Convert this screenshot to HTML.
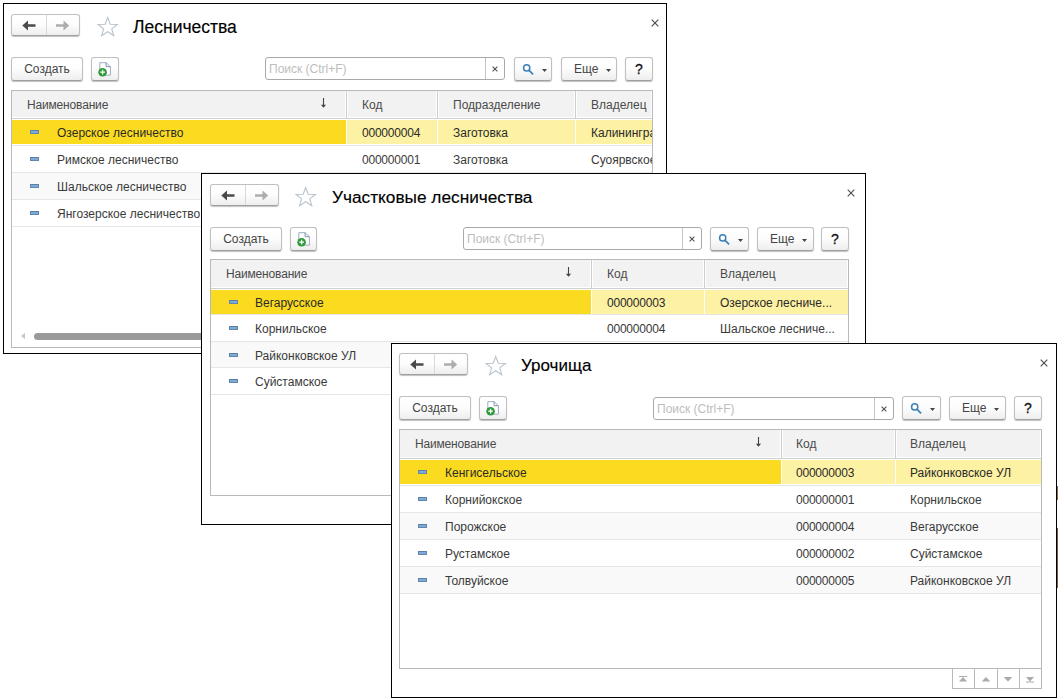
<!DOCTYPE html>
<html lang="ru"><head><meta charset="utf-8"><title>Лесничества</title><style>
html,body{margin:0;padding:0;}
body{width:1058px;height:699px;overflow:hidden;background:#fff;position:relative;font-family:"Liberation Sans",sans-serif;font-size:12px;color:#333;}
.win{position:absolute;box-sizing:border-box;border:1px solid #000;background:#fff;overflow:hidden;}
.win *{box-sizing:border-box;}
.abs{position:absolute;}
.btn{position:absolute;border:1px solid #c0c0c0;border-bottom-color:#a0a0a0;border-radius:3px;background:linear-gradient(#ffffff 0%,#fdfdfd 45%,#eeeeee 100%);box-shadow:0 1px 1px rgba(0,0,0,.25);color:#444;text-align:center;white-space:nowrap;}
.nav .div{position:absolute;left:34px;top:0;width:1px;height:20px;background:#d9d9d9;}
.title{position:absolute;line-height:22px;color:#000;white-space:nowrap;-webkit-text-stroke:0.15px #000;}
.search{position:absolute;border:1px solid #a9a9a9;border-radius:3px;background:#fff;}
.search .ph{position:absolute;left:3px;top:0;line-height:22px;color:#bdbdbd;white-space:nowrap;}
.search .clr{position:absolute;right:0;top:0;height:21px;border-left:1px solid #c4c4c4;}
.tbl{position:absolute;border:1px solid #b9b9b9;background:#fff;overflow:hidden;}
.hdr{position:absolute;left:0;top:0;width:100%;background:#f2f2f2;border-bottom:1px solid #d0d0d0;box-shadow:inset 0 -1px 0 #fff,inset -1px 0 0 #fff;}
.hc{position:absolute;top:0;line-height:28px;color:#4a4a4a;white-space:nowrap;}
.hsep{position:absolute;top:0;width:1px;height:100%;background:#cecece;box-shadow:-1px 0 0 #fff,1px 0 0 #fff;}
.row{position:absolute;left:0;width:100%;height:27px;border-bottom:1px solid #e6e6e6;}
.row.alt{background:#f9f9f9;}
.cell{position:absolute;top:1px;height:25px;line-height:27px;white-space:nowrap;color:#3a3a3a;overflow:hidden;}
.sel .cell{color:#2a2a2a;}
.selbg{position:absolute;top:1px;height:24px;}
.ico{position:absolute;top:11px;width:9px;height:4px;background:#7faad6;border:1px solid #5f87b0;border-top-color:#5a7fa6;}
.navb{position:absolute;border:1px solid #b9b9b9;border-top:none;}
</style></head><body>
<div class="win" style="left:3px;top:3px;width:664px;height:351px;"><div class="btn nav" style="left:7px;top:10px;width:69px;height:22px;"><div class="div"></div><svg class="abs" style="left:10px;top:5px" width="15" height="11" viewBox="0 0 15 11"><path d="M0.3 5.5 L6 0.5 L6 4.3 L13.5 4.3 L13.5 6.7 L6 6.7 L6 10.5 Z" fill="#4a4a4a"/></svg><svg class="abs" style="left:43px;top:5px" width="15" height="11" viewBox="0 0 15 11"><path d="M14.2 5.5 L8.5 0.5 L8.5 4.3 L1 4.3 L1 6.7 L8.5 6.7 L8.5 10.5 Z" fill="#adadad"/></svg></div><svg class="abs" style="left:92px;top:12px" width="23.4" height="21.45" viewBox="0 0 24 22"><path d="M12 1.6 L14.6 8.4 L21.9 8.7 L16.2 13.2 L18.2 20.2 L12 16.2 L5.8 20.2 L7.8 13.2 L2.1 8.7 L9.4 8.4 Z" fill="#fff" stroke="#b9c3cb" stroke-width="1.15" stroke-linejoin="miter"/></svg><div class="title" style="left:129px;top:12px;font-size:17.5px">Лесничества</div><div class="btn" style="left:7px;top:53px;width:72px;height:24px;line-height:22px;">Создать</div><div class="btn" style="left:87px;top:53px;width:28px;height:24px;line-height:22px;"><svg class="abs" style="left:6px;top:3px" width="14" height="16" viewBox="0 0 14 16"><path d="M1.8 1.7 H8.1 L12.4 5.7 V14.2 H1.8 Z" fill="#fff" stroke="#9dabbf" stroke-width="1"/><path d="M8.1 1.7 V5.7 H12.4" fill="none" stroke="#7f93ae" stroke-width="1"/><circle cx="4.6" cy="11.2" r="4.3" fill="#2d9a38"/><path d="M4.6 8.8 V13.6 M2.2 11.2 H7" stroke="#fff" stroke-width="1.3"/></svg></div><div class="search" style="left:261px;top:53px;width:240px;height:23px;"><span class="ph">Поиск (Ctrl+F)</span><div class="clr" style="width:19px"><svg class="abs" style="left:6px;top:8px" width="6" height="6" viewBox="0 0 6 6"><path d="M0.6 0.6 L5.4 5.4 M5.4 0.6 L0.6 5.4" stroke="#555" stroke-width="1.15"/></svg></div></div><div class="btn" style="left:510px;top:53px;width:38px;height:24px;line-height:22px;"><svg class="abs" style="left:7px;top:5px" width="13" height="13" viewBox="0 0 13 13"><circle cx="4.7" cy="4.9" r="3.1" fill="#fff" stroke="#3a80b8" stroke-width="1.5"/><path d="M7.1 7.3 L10.6 10.9" stroke="#3a80b8" stroke-width="1.7" stroke-linecap="round"/></svg><svg class="abs" style="left:27px;top:11px" width="5" height="3" viewBox="0 0 5 3"><path d="M0 0 H5 L2.5 3 Z" fill="#444"/></svg></div><div class="btn" style="left:557px;top:53px;width:56px;height:24px;line-height:22px;text-align:left;padding-left:12px;">Еще<svg class="abs" style="left:44px;top:11px" width="5" height="3" viewBox="0 0 5 3"><path d="M0 0 H5 L2.5 3 Z" fill="#444"/></svg></div><div class="btn" style="left:621px;top:53px;width:28px;height:24px;line-height:22px;font-size:14px;color:#111;-webkit-text-stroke:0.3px #111;">?</div><svg class="abs" style="left:647px;top:15px" width="8" height="8" viewBox="0 0 8 8"><path d="M0.7 0.7 L7.3 7.3 M7.3 0.7 L0.7 7.3" stroke="#505050" stroke-width="1.15"/></svg><div class="tbl" style="left:7px;top:86px;width:642px;height:258px;"><div class="hdr" style="height:28px"><div class="hc" style="left:15px;letter-spacing:-0.17px;">Наименование</div><div class="hc" style="left:350px;">Код</div><div class="hc" style="left:441px;">Подразделение</div><div class="hc" style="left:579px;">Владелец</div><div class="hsep" style="left:334px"></div><div class="hsep" style="left:425px"></div><div class="hsep" style="left:563px"></div><svg class="abs" style="left:308px;top:7px" width="7" height="11" viewBox="0 0 7 11"><path d="M3.5 0 V8" stroke="#444" stroke-width="1.1"/><path d="M0.9 6.7 H6.1 L3.5 9.8 Z" fill="#444"/></svg></div><div class="row sel" style="top:28px;height:27px"><div class="selbg" style="left:0px;width:334px;background:#fbdb1f"></div><div class="selbg" style="left:335px;width:90px;background:#fdf1a3"></div><div class="selbg" style="left:426px;width:137px;background:#fdf1a3"></div><div class="selbg" style="left:564px;width:76px;background:#fdf1a3"></div><div class="ico" style="left:18px"></div><div class="cell" style="left:45px;width:289px;">Озерское лесничество</div><div class="cell" style="left:350px;width:75px;letter-spacing:-0.22px;">000000004</div><div class="cell" style="left:441px;width:122px;">Заготовка</div><div class="cell" style="left:579px;width:61px;">Калининградское</div></div><div class="row" style="top:55px;height:27px"><div class="ico" style="left:18px"></div><div class="cell" style="left:45px;width:289px;">Римское лесничество</div><div class="cell" style="left:350px;width:75px;letter-spacing:-0.22px;">000000001</div><div class="cell" style="left:441px;width:122px;">Заготовка</div><div class="cell" style="left:579px;width:61px;">Суоярвское</div></div><div class="row alt" style="top:82px;height:27px"><div class="ico" style="left:18px"></div><div class="cell" style="left:45px;width:289px;">Шальское лесничество</div><div class="cell" style="left:350px;width:75px;letter-spacing:-0.22px;">000000002</div><div class="cell" style="left:441px;width:122px;">Заготовка</div><div class="cell" style="left:579px;width:61px;">Суоярвское</div></div><div class="row" style="top:109px;height:27px"><div class="ico" style="left:18px"></div><div class="cell" style="left:45px;width:289px;">Янгозерское лесничество</div><div class="cell" style="left:350px;width:75px;letter-spacing:-0.22px;">000000003</div><div class="cell" style="left:441px;width:122px;">Заготовка</div><div class="cell" style="left:579px;width:61px;">Суоярвское</div></div><svg class="abs" style="left:8px;top:241px" width="8" height="8" viewBox="0 0 8 8"><path d="M1 4 L5 0.8 V7.2 Z" fill="#c8c8c8"/></svg><div class="abs" style="left:22px;top:242px;width:700px;height:7px;border-radius:4px;background:#9a9a9a"></div></div></div>
<div class="win" style="left:201px;top:173px;width:665px;height:352px;"><div class="btn nav" style="left:8px;top:10px;width:69px;height:22px;"><div class="div"></div><svg class="abs" style="left:10px;top:5px" width="15" height="11" viewBox="0 0 15 11"><path d="M0.3 5.5 L6 0.5 L6 4.3 L13.5 4.3 L13.5 6.7 L6 6.7 L6 10.5 Z" fill="#4a4a4a"/></svg><svg class="abs" style="left:43px;top:5px" width="15" height="11" viewBox="0 0 15 11"><path d="M14.2 5.5 L8.5 0.5 L8.5 4.3 L1 4.3 L1 6.7 L8.5 6.7 L8.5 10.5 Z" fill="#adadad"/></svg></div><svg class="abs" style="left:92px;top:12px" width="23.4" height="21.45" viewBox="0 0 24 22"><path d="M12 1.6 L14.6 8.4 L21.9 8.7 L16.2 13.2 L18.2 20.2 L12 16.2 L5.8 20.2 L7.8 13.2 L2.1 8.7 L9.4 8.4 Z" fill="#fff" stroke="#b9c3cb" stroke-width="1.15" stroke-linejoin="miter"/></svg><div class="title" style="left:130px;top:12px;font-size:17.25px">Участковые лесничества</div><div class="btn" style="left:8px;top:53px;width:72px;height:24px;line-height:22px;">Создать</div><div class="btn" style="left:88px;top:53px;width:27px;height:24px;line-height:22px;"><svg class="abs" style="left:6px;top:3px" width="14" height="16" viewBox="0 0 14 16"><path d="M1.8 1.7 H8.1 L12.4 5.7 V14.2 H1.8 Z" fill="#fff" stroke="#9dabbf" stroke-width="1"/><path d="M8.1 1.7 V5.7 H12.4" fill="none" stroke="#7f93ae" stroke-width="1"/><circle cx="4.6" cy="11.2" r="4.3" fill="#2d9a38"/><path d="M4.6 8.8 V13.6 M2.2 11.2 H7" stroke="#fff" stroke-width="1.3"/></svg></div><div class="search" style="left:261px;top:53px;width:239px;height:23px;"><span class="ph">Поиск (Ctrl+F)</span><div class="clr" style="width:19px"><svg class="abs" style="left:6px;top:8px" width="6" height="6" viewBox="0 0 6 6"><path d="M0.6 0.6 L5.4 5.4 M5.4 0.6 L0.6 5.4" stroke="#555" stroke-width="1.15"/></svg></div></div><div class="btn" style="left:508px;top:53px;width:39px;height:24px;line-height:22px;"><svg class="abs" style="left:7px;top:5px" width="13" height="13" viewBox="0 0 13 13"><circle cx="4.7" cy="4.9" r="3.1" fill="#fff" stroke="#3a80b8" stroke-width="1.5"/><path d="M7.1 7.3 L10.6 10.9" stroke="#3a80b8" stroke-width="1.7" stroke-linecap="round"/></svg><svg class="abs" style="left:27px;top:11px" width="5" height="3" viewBox="0 0 5 3"><path d="M0 0 H5 L2.5 3 Z" fill="#444"/></svg></div><div class="btn" style="left:555px;top:53px;width:57px;height:24px;line-height:22px;text-align:left;padding-left:12px;">Еще<svg class="abs" style="left:44px;top:11px" width="5" height="3" viewBox="0 0 5 3"><path d="M0 0 H5 L2.5 3 Z" fill="#444"/></svg></div><div class="btn" style="left:619px;top:53px;width:28px;height:24px;line-height:22px;font-size:14px;color:#111;-webkit-text-stroke:0.3px #111;">?</div><svg class="abs" style="left:645px;top:15px" width="8" height="8" viewBox="0 0 8 8"><path d="M0.7 0.7 L7.3 7.3 M7.3 0.7 L0.7 7.3" stroke="#505050" stroke-width="1.15"/></svg><div class="tbl" style="left:8px;top:85px;width:639px;height:237px;"><div class="hdr" style="height:29px"><div class="hc" style="left:15px;letter-spacing:-0.17px;">Наименование</div><div class="hc" style="left:396px;">Код</div><div class="hc" style="left:509px;">Владелец</div><div class="hsep" style="left:380px"></div><div class="hsep" style="left:493px"></div><svg class="abs" style="left:354px;top:7px" width="7" height="11" viewBox="0 0 7 11"><path d="M3.5 0 V8" stroke="#444" stroke-width="1.1"/><path d="M0.9 6.7 H6.1 L3.5 9.8 Z" fill="#444"/></svg></div><div class="row sel" style="top:29px;height:26px"><div class="selbg" style="left:0px;width:380px;background:#fbdb1f"></div><div class="selbg" style="left:381px;width:112px;background:#fdf1a3"></div><div class="selbg" style="left:494px;width:143px;background:#fdf1a3"></div><div class="ico" style="left:18px"></div><div class="cell" style="left:44px;width:336px;">Вегарусское</div><div class="cell" style="left:396px;width:97px;letter-spacing:-0.22px;">000000003</div><div class="cell" style="left:509px;width:128px;">Озерское лесниче...</div></div><div class="row" style="top:55px;height:27px"><div class="ico" style="left:18px"></div><div class="cell" style="left:44px;width:336px;">Корнильское</div><div class="cell" style="left:396px;width:97px;letter-spacing:-0.22px;">000000004</div><div class="cell" style="left:509px;width:128px;">Шальское лесниче...</div></div><div class="row alt" style="top:82px;height:26px"><div class="ico" style="left:18px"></div><div class="cell" style="left:44px;width:336px;">Райконковское УЛ</div><div class="cell" style="left:396px;width:97px;letter-spacing:-0.22px;">000000001</div><div class="cell" style="left:509px;width:128px;">Римское лесничес...</div></div><div class="row" style="top:108px;height:27px"><div class="ico" style="left:18px"></div><div class="cell" style="left:44px;width:336px;">Суйстамское</div><div class="cell" style="left:396px;width:97px;letter-spacing:-0.22px;">000000002</div><div class="cell" style="left:509px;width:128px;">Янгозерское лесн...</div></div></div><div class="navb" style="left:557px;top:322px;width:23px;height:21px;"><svg class="abs" style="left:5px;top:7px" width="10" height="7" viewBox="0 0 10 7"><path d="M1 0.5 H9" stroke="#aaa" stroke-width="1"/><path d="M5 1 L9 5.5 H1 Z" fill="#aaa"/></svg></div><div class="navb" style="left:579px;top:322px;width:23px;height:21px;"><svg class="abs" style="left:5px;top:7px" width="10" height="7" viewBox="0 0 10 7"><path d="M5 1 L9.3 5.5 H0.7 Z" fill="#aaa"/></svg></div><div class="navb" style="left:601px;top:322px;width:24px;height:21px;"><svg class="abs" style="left:6px;top:7px" width="10" height="7" viewBox="0 0 10 7"><path d="M5 5.5 L9.3 1 H0.7 Z" fill="#aaa"/></svg></div><div class="navb" style="left:624px;top:322px;width:23px;height:21px;"><svg class="abs" style="left:5px;top:7px" width="10" height="7" viewBox="0 0 10 7"><path d="M1 6 H9" stroke="#aaa" stroke-width="1"/><path d="M5 5.5 L9 1 H1 Z" fill="#aaa"/></svg></div></div>
<div class="win" style="left:391px;top:343px;width:666px;height:355px;"><div class="btn nav" style="left:7px;top:9px;width:69px;height:22px;"><div class="div"></div><svg class="abs" style="left:10px;top:5px" width="15" height="11" viewBox="0 0 15 11"><path d="M0.3 5.5 L6 0.5 L6 4.3 L13.5 4.3 L13.5 6.7 L6 6.7 L6 10.5 Z" fill="#4a4a4a"/></svg><svg class="abs" style="left:43px;top:5px" width="15" height="11" viewBox="0 0 15 11"><path d="M14.2 5.5 L8.5 0.5 L8.5 4.3 L1 4.3 L1 6.7 L8.5 6.7 L8.5 10.5 Z" fill="#adadad"/></svg></div><svg class="abs" style="left:92px;top:11px" width="23.4" height="21.45" viewBox="0 0 24 22"><path d="M12 1.6 L14.6 8.4 L21.9 8.7 L16.2 13.2 L18.2 20.2 L12 16.2 L5.8 20.2 L7.8 13.2 L2.1 8.7 L9.4 8.4 Z" fill="#fff" stroke="#b9c3cb" stroke-width="1.15" stroke-linejoin="miter"/></svg><div class="title" style="left:129px;top:11px;font-size:17px">Урочища</div><div class="btn" style="left:7px;top:52px;width:72px;height:24px;line-height:23px;">Создать</div><div class="btn" style="left:87px;top:52px;width:28px;height:24px;line-height:23px;"><svg class="abs" style="left:6px;top:3px" width="14" height="16" viewBox="0 0 14 16"><path d="M1.8 1.7 H8.1 L12.4 5.7 V14.2 H1.8 Z" fill="#fff" stroke="#9dabbf" stroke-width="1"/><path d="M8.1 1.7 V5.7 H12.4" fill="none" stroke="#7f93ae" stroke-width="1"/><circle cx="4.6" cy="11.2" r="4.3" fill="#2d9a38"/><path d="M4.6 8.8 V13.6 M2.2 11.2 H7" stroke="#fff" stroke-width="1.3"/></svg></div><div class="search" style="left:261px;top:53px;width:241px;height:23px;"><span class="ph">Поиск (Ctrl+F)</span><div class="clr" style="width:19px"><svg class="abs" style="left:6px;top:8px" width="6" height="6" viewBox="0 0 6 6"><path d="M0.6 0.6 L5.4 5.4 M5.4 0.6 L0.6 5.4" stroke="#555" stroke-width="1.15"/></svg></div></div><div class="btn" style="left:510px;top:52px;width:39px;height:24px;line-height:23px;"><svg class="abs" style="left:7px;top:5px" width="13" height="13" viewBox="0 0 13 13"><circle cx="4.7" cy="4.9" r="3.1" fill="#fff" stroke="#3a80b8" stroke-width="1.5"/><path d="M7.1 7.3 L10.6 10.9" stroke="#3a80b8" stroke-width="1.7" stroke-linecap="round"/></svg><svg class="abs" style="left:27px;top:11px" width="5" height="3" viewBox="0 0 5 3"><path d="M0 0 H5 L2.5 3 Z" fill="#444"/></svg></div><div class="btn" style="left:557px;top:52px;width:57px;height:24px;line-height:23px;text-align:left;padding-left:12px;">Еще<svg class="abs" style="left:44px;top:11px" width="5" height="3" viewBox="0 0 5 3"><path d="M0 0 H5 L2.5 3 Z" fill="#444"/></svg></div><div class="btn" style="left:622px;top:52px;width:28px;height:24px;line-height:23px;font-size:14px;color:#111;-webkit-text-stroke:0.3px #111;">?</div><svg class="abs" style="left:648px;top:15px" width="8" height="8" viewBox="0 0 8 8"><path d="M0.7 0.7 L7.3 7.3 M7.3 0.7 L0.7 7.3" stroke="#505050" stroke-width="1.15"/></svg><div class="tbl" style="left:7px;top:85px;width:643px;height:240px;"><div class="hdr" style="height:29px"><div class="hc" style="left:15px;letter-spacing:-0.17px;">Наименование</div><div class="hc" style="left:396px;">Код</div><div class="hc" style="left:510px;">Владелец</div><div class="hsep" style="left:381px"></div><div class="hsep" style="left:495px"></div><svg class="abs" style="left:355px;top:7px" width="7" height="11" viewBox="0 0 7 11"><path d="M3.5 0 V8" stroke="#444" stroke-width="1.1"/><path d="M0.9 6.7 H6.1 L3.5 9.8 Z" fill="#444"/></svg></div><div class="row sel" style="top:29px;height:27px"><div class="selbg" style="left:0px;width:381px;background:#fbdb1f"></div><div class="selbg" style="left:382px;width:113px;background:#fdf1a3"></div><div class="selbg" style="left:496px;width:145px;background:#fdf1a3"></div><div class="ico" style="left:18px"></div><div class="cell" style="left:45px;width:336px;">Кенгисельское</div><div class="cell" style="left:396px;width:99px;letter-spacing:-0.22px;">000000003</div><div class="cell" style="left:510px;width:131px;">Райконковское УЛ</div></div><div class="row" style="top:56px;height:27px"><div class="ico" style="left:18px"></div><div class="cell" style="left:45px;width:336px;">Корнийокское</div><div class="cell" style="left:396px;width:99px;letter-spacing:-0.22px;">000000001</div><div class="cell" style="left:510px;width:131px;">Корнильское</div></div><div class="row alt" style="top:83px;height:27px"><div class="ico" style="left:18px"></div><div class="cell" style="left:45px;width:336px;">Порожское</div><div class="cell" style="left:396px;width:99px;letter-spacing:-0.22px;">000000004</div><div class="cell" style="left:510px;width:131px;">Вегарусское</div></div><div class="row" style="top:110px;height:27px"><div class="ico" style="left:18px"></div><div class="cell" style="left:45px;width:336px;">Рустамское</div><div class="cell" style="left:396px;width:99px;letter-spacing:-0.22px;">000000002</div><div class="cell" style="left:510px;width:131px;">Суйстамское</div></div><div class="row alt" style="top:137px;height:27px"><div class="ico" style="left:18px"></div><div class="cell" style="left:45px;width:336px;">Толвуйское</div><div class="cell" style="left:396px;width:99px;letter-spacing:-0.22px;">000000005</div><div class="cell" style="left:510px;width:131px;">Райконковское УЛ</div></div></div><div class="navb" style="left:560px;top:325px;width:23px;height:20px;"><svg class="abs" style="left:5px;top:7px" width="10" height="7" viewBox="0 0 10 7"><path d="M1 0.5 H9" stroke="#aaa" stroke-width="1"/><path d="M5 1 L9 5.5 H1 Z" fill="#aaa"/></svg></div><div class="navb" style="left:582px;top:325px;width:24px;height:20px;"><svg class="abs" style="left:6px;top:7px" width="10" height="7" viewBox="0 0 10 7"><path d="M5 1 L9.3 5.5 H0.7 Z" fill="#aaa"/></svg></div><div class="navb" style="left:605px;top:325px;width:23px;height:20px;"><svg class="abs" style="left:5px;top:7px" width="10" height="7" viewBox="0 0 10 7"><path d="M5 5.5 L9.3 1 H0.7 Z" fill="#aaa"/></svg></div><div class="navb" style="left:627px;top:325px;width:23px;height:20px;"><svg class="abs" style="left:5px;top:7px" width="10" height="7" viewBox="0 0 10 7"><path d="M1 6 H9" stroke="#aaa" stroke-width="1"/><path d="M5 5.5 L9 1 H1 Z" fill="#aaa"/></svg></div></div>
<div class="abs" style="left:1057px;top:486px;width:1px;height:14px;background:#8a6a4a"></div><div class="abs" style="left:1057px;top:528px;width:1px;height:60px;background:#7a5a40"></div>
</body></html>
